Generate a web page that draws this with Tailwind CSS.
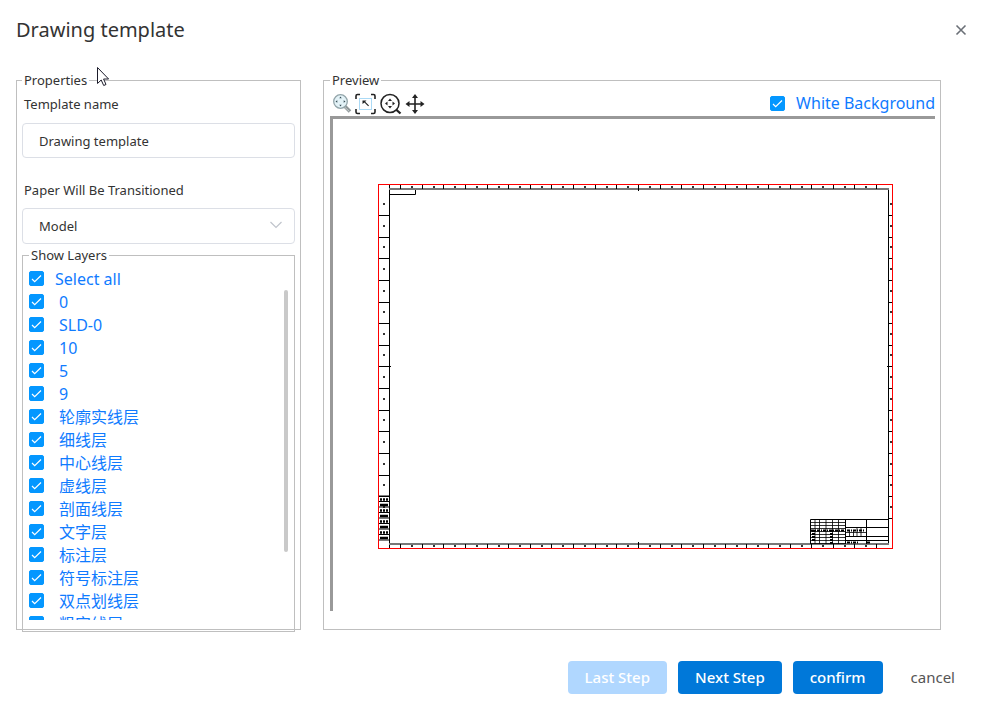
<!DOCTYPE html>
<html lang="en">

<head>
    <meta charset="UTF-8">
    <meta name="viewport" content="width=device-width, initial-scale=1.0">
    <title>Drawing template</title>
    <script src="https://cdn.jsdelivr.net/npm/@tailwindcss/browser@4"></script>
</head>

<body class="bg-white text-[#333] text-[13px] font-['Noto_Sans','Noto_Sans_CJK_SC',sans-serif]">

    <header class="flex items-center justify-between pl-4 pr-4 pt-4">
        <h1 class="text-[20px] leading-7">Drawing template</h1>
        <button class="w-3 h-3 text-[#6b7077]" aria-label="Close">
            <svg viewBox="0 0 12 12" fill="none" stroke="currentColor" stroke-width="1.6">
                <path d="M1.5 1.5l9 9M10.5 1.5l-9 9" />
            </svg>
        </button>
    </header>

    <main class="flex gap-[22px] pl-4 pr-[42px] pt-[27px]">
        <fieldset class="w-[285px] shrink-0 border border-[#bfbfbf] px-[5px]">
            <legend class="px-[2px] leading-[19px]">Properties</legend>

            <label class="block pl-[2px] mt-1 leading-5" for="name">Template name</label>
            <input class="block w-full h-[35px] mt-[9px] px-4 border border-[#dcdfe6] rounded" type="text" id="name" value="Drawing template">

            <label class="block pl-[2px] mt-[22px] leading-5" for="paper">Paper Will Be Transitioned</label>
            <div class="relative mt-2">
                <select class="block w-full h-9 px-4 pt-[2px] border border-[#dcdfe6] rounded appearance-none bg-white" id="paper">
                    <option>Model</option>
                </select>
                <svg class="absolute right-[13px] top-[11px] w-3 h-3 pointer-events-none" viewBox="0 0 12 12" fill="none" stroke="#c0c4cc" stroke-width="1.2">
                    <path d="M0.5 3l5.5 5.5L11.5 3" />
                </svg>
            </div>

            <fieldset class="relative mt-[2px] -mb-[3px] border border-[#bfbfbf] pl-[6px] pt-[2px] pb-[11px]">
                <legend class="px-[2px] leading-[19px]">Show Layers</legend>
                <label class="flex items-center gap-[11px] h-[23px] text-base text-[#0f7bff]">
                    <span class="grid">
                        <input class="col-start-1 row-start-1 w-[15px] h-[15px] appearance-none rounded-xs border border-[#0497ff] checked:bg-[#0497ff]" type="checkbox" id="all" checked>
                        <svg class="col-start-1 row-start-1 w-[15px] h-[15px] pointer-events-none" viewBox="0 0 15 15" fill="none" stroke="#fff" stroke-width="1.2"><path d="M3 8l2.7 2.7L12 4.5" /></svg>
                    </span>
                    Select all
                </label>
                <div class="h-[330px] overflow-y-auto [scrollbar-width:none]" id="layers"></div>
                <div class="absolute right-[6px] top-[25px] w-1 h-[262px] rounded-full bg-[#c9c9c9]"></div>
            </fieldset>
        </fieldset>

        <fieldset class="flex-1 min-w-0 border border-[#bfbfbf] pl-[6px] pr-[5px]">
            <legend class="px-[2px] leading-[19px]">Preview</legend>
            <div class="flex items-center justify-between h-[26px]">
                <div class="flex gap-[1px] pt-[2px]">
                    <button class="w-[23px] h-[22px]" aria-label="Zoom">
                        <svg viewBox="0 0 23 22" fill="none">
                            <path d="M14.500 13l5.500 5.500" stroke="#8f9799" stroke-width="3.500" />
                            <path d="M14.500 14l5 4.500" stroke="#c5cccd" stroke-width="1" />
                            <circle cx="10.500" cy="8.500" r="6.800" fill="#e3f2f7" stroke="#93a5aa" stroke-width="1.300" />
                            <path d="M10.500 3.500l1.200 1.800h-2.400zM10.500 13.500l1.200-1.800h-2.400zM5.500 8.500l1.800-1.200v2.400zM15.500 8.500l-1.800-1.200v2.400z" fill="#344b54" />
                        </svg>
                    </button>
                    <button class="w-[23px] h-[22px]" aria-label="Zoom window">
                        <svg viewBox="0 0 23 22" fill="none">
                            <path d="M2 6V3q0-1.500 1.500-1.500H6M17 1.500h2.500Q21 1.500 21 3v3M21 16v3q0 1.500-1.500 1.500H17M6 20.500H3.500Q2 20.500 2 19v-3" stroke="#222" stroke-width="1.600" />
                            <rect x="5.500" y="5.500" width="12" height="11" stroke="#56b4ec" stroke-dasharray="1 1" />
                            <path d="M8.500 7.500h4l-1.300 1.300 3.800 3.700-.8.8-3.800-3.700-1.900 1.400z" fill="#222" />
                        </svg>
                    </button>
                    <button class="w-[23px] h-[22px] ml-[1px]" aria-label="Zoom extents">
                        <svg viewBox="0 0 23 22" fill="none">
                            <circle cx="11" cy="10.500" r="9" stroke="#222" stroke-width="1.500" />
                            <path d="M17 16.500l4.500 4" stroke="#222" stroke-width="2.300" />
                            <path d="M11 5.500l2 2.500H9zM11 15.500l2-2.500H9zM6 10.500l2.500-2v4zM16 10.500l-2.500-2v4z" fill="#222" />
                        </svg>
                    </button>
                    <button class="w-[23px] h-[22px] ml-[1px]" aria-label="Pan">
                        <svg viewBox="0 0 23 22" fill="none">
                            <path d="M11 3v16M3 11h16" stroke="#222" stroke-width="1.600" />
                            <path d="M11 1l3 4H8zM11 21l3-4H8zM1.500 11l4-3v6zM20.500 11l-4-3v6z" fill="#222" />
                        </svg>
                    </button>
                </div>
                <label class="flex items-center gap-[11px] text-base leading-6 text-[#0f7bff]">
                    <span class="grid">
                        <input class="col-start-1 row-start-1 w-[15px] h-[15px] appearance-none rounded-xs border border-[#0497ff] checked:bg-[#0497ff]" type="checkbox" id="white" checked>
                        <svg class="col-start-1 row-start-1 w-[15px] h-[15px] pointer-events-none" viewBox="0 0 15 15" fill="none" stroke="#fff" stroke-width="1.2"><path d="M3 8l2.7 2.7L12 4.5" /></svg>
                    </span>
                    White Background
                </label>
            </div>
            <div class="border-t-3 border-l-3 border-[#999]">
                <svg class="block w-full" viewBox="0 0 602 492" fill="none" stroke="#000" id="sheet"></svg>
            </div>
        </fieldset>
    </main>

    <footer class="flex justify-end gap-[11px] pr-[11px] pt-[31px] pb-[9px] text-[15px] font-medium">
        <button class="h-[33px] px-[17px] rounded bg-[#b0d7ff] text-white" disabled>Last Step</button>
        <button class="h-[33px] px-[17px] rounded bg-[#0078d9] text-white">Next Step</button>
        <button class="h-[33px] px-[17px] rounded bg-[#0078d9] text-white">confirm</button>
        <button class="h-[33px] px-[17px] rounded text-[#555] font-normal">cancel</button>
    </footer>

    <!-- mouse pointer -->
    <svg class="absolute left-[96px] top-[66px] w-[14px] h-[21px] pointer-events-none" viewBox="0 0 14 21" fill="#fff" stroke="#1c1c2b">
        <path d="M1.500 1.500v16l3.700-3.500 2.500 5.500 2.300-1-2.400-5.500h5z" />
    </svg>

    <script>
        const layers = ["0", "SLD-0", "10", "5", "9", "轮廓实线层", "细线层", "中心线层", "虚线层", "剖面线层", "文字层", "标注层", "符号标注层", "双点划线层", "粗实线层"];
        const list = document.getElementById("layers");
        const all = document.getElementById("all");
        let rows = "";
        layers.forEach((layer, i) => {
            rows += `
                <label class="flex items-center gap-[15px] h-[23px] text-base text-[#0f7bff]">
                    <span class="grid">
                        <input class="col-start-1 row-start-1 w-[15px] h-[15px] appearance-none rounded-xs border border-[#0497ff] checked:bg-[#0497ff]" type="checkbox" id="layer${i}" checked>
                        <svg class="col-start-1 row-start-1 w-[15px] h-[15px] pointer-events-none" viewBox="0 0 15 15" fill="none" stroke="#fff" stroke-width="1.2"><path d="M3 8l2.7 2.7L12 4.5" /></svg>
                    </span>
                    ${layer}
                </label>`;
        });
        list.innerHTML = rows;
        all.addEventListener("change", () => {
            list.querySelectorAll("input").forEach(box => box.checked = all.checked);
        });

        // sheet frame
        const line = (x1, y1, x2, y2) => `<path d="M${x1} ${y1}L${x2} ${y2}" />`;
        const dot = (x, y) => `<path d="M${x - 1} ${y}h2" stroke-width="2" stroke="#333" />`;
        let art = `<path d="M56.5 66V429M555.5 70V425M56.5 75.5h26V70" />
            <path d="M56 70H556M56 425H556" stroke="#777" stroke-width="2" />`;

        // zone ticks and zone letters
        for (let i = 0; i < 23; i++) {
            const x = Math.round(67 + i * 21.64) + 0.5;
            art += line(x, 66, x, 70) + line(x, 425, x, 429);
            if (i < 22) art += dot(x + 11.5, 68) + dot(x + 11.5, 427);
        }
        for (let i = 0; i < 15; i++) {
            const y = Math.round(96 + i * 21.64) + 0.5;
            if (i < 14) art += line(46, y, 56, y);
            art += line(556, y, 559, y) + dot(51, y - 11.5) + dot(558, y - 11.5);
        }
        art += line(305.5, 65, 305.5, 72) + line(305.5, 423, 305.5, 430) + line(46, 247.5, 58, 247.5) + line(554, 247.5, 560, 247.5);

        // side strip
        for (let i = 0; i < 9; i++) {
            const y = 377 + i * 5.5;
            art += line(46, y, 56, y);
            if (i < 8) art += `<path d="M47 ${y + 3.5}h9" stroke-width="2.5" stroke-dasharray="${i % 2 ? "8 1" : "2 1"}" />`;
        }

        // title block
        art += `<path d="M477.5 425V400.5H555.5M512.5 400V425M533.500 400V425M512 408.500H555M512 417.500H555M512 421.500H555" />`;
        art += `<g stroke-width=".8"><path d="M482 400V425M486.500 400V425M493 400V425M499.500 400V425M505.500 400V425" />`;
        for (let y = 403.5; y < 425; y += 3) art += line(477, y, 512, y);
        art += `<path d="M516.500 411V417M520.500 411V417M524 409V417M528 409V417M513 413.500H533" /></g>`;
        art += `<path d="M478 411.500H512M514 411.500H532M514 423.500H526M534 423.500H537" stroke-width="2" stroke-dasharray="3 1 1 1" />
            <path d="M480.500 411V422M498.500 411V425" stroke-width="3" stroke-dasharray="2 1" />`;

        art += `<rect x="45.5" y="65.5" width="514" height="364" stroke="#f00" />`;
        document.getElementById("sheet").innerHTML = art;
    </script>
</body>

</html>
